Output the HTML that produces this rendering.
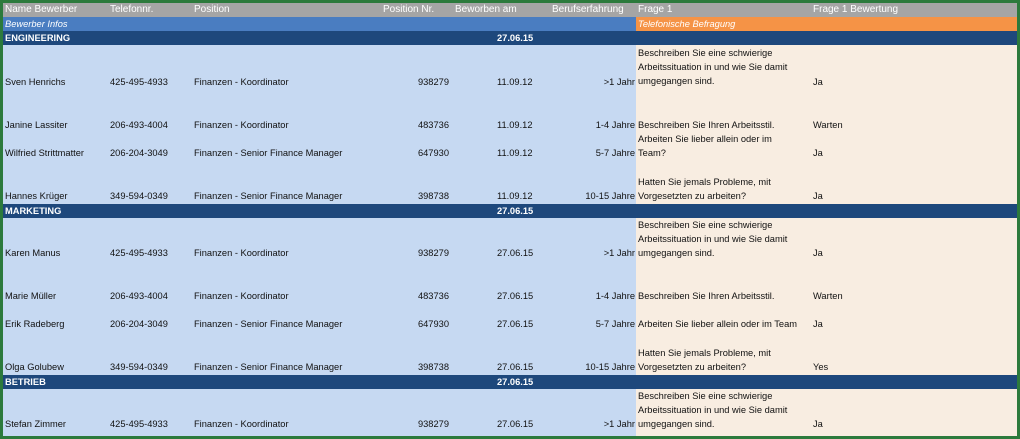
<!DOCTYPE html>
<html><head><meta charset="utf-8"><style>
*{margin:0;padding:0;box-sizing:border-box}
body{width:1020px;height:439px;background:#2c7a3c;position:relative;overflow:hidden;font-family:"Liberation Sans",Arial,sans-serif;font-size:9.3px;color:#111}
.b{position:absolute}
.t{position:absolute;line-height:14px;white-space:nowrap}
.r{text-align:right}
.h{color:#fff;font-size:10px}
.w{color:#fff;font-weight:bold}
</style></head><body>
<div class="b" style="left:3px;top:3px;width:1014px;height:14px;background:#a5a5a5"></div>
<div class="b" style="left:3px;top:17px;width:633px;height:14px;background:#4a7dc1"></div>
<div class="b" style="left:636px;top:17px;width:381px;height:14px;background:#f59346"></div>
<div class="b" style="left:3px;top:31px;width:633px;height:405px;background:#c6d9f2"></div>
<div class="b" style="left:636px;top:31px;width:381px;height:405px;background:#f8ede1"></div>
<div class="b" style="left:3px;top:31px;width:1014px;height:14px;background:#1e487c"></div>
<div class="b" style="left:3px;top:204px;width:1014px;height:14px;background:#1e487c"></div>
<div class="b" style="left:3px;top:375px;width:1014px;height:14px;background:#1e487c"></div>

<div class="t h" style="left:5px;top:3px">Name Bewerber</div>
<div class="t h" style="left:110px;top:3px">Telefonnr.</div>
<div class="t h" style="left:194px;top:3px">Position</div>
<div class="t h" style="left:383px;top:3px">Position Nr.</div>
<div class="t h" style="left:455px;top:3px">Beworben am</div>
<div class="t h" style="left:552px;top:3px">Berufserfahrung</div>
<div class="t h" style="left:638px;top:3px">Frage 1</div>
<div class="t h" style="left:813px;top:3px">Frage 1 Bewertung</div>
<div class="t" style="left:5px;top:17px;color:#fff;font-style:italic">Bewerber Infos</div>
<div class="t" style="left:638px;top:17px;color:#fff;font-style:italic">Telefonische Befragung</div>

<div class="t w" style="left:5px;top:31px">ENGINEERING</div><div class="t w" style="left:497px;top:31px">27.06.15</div>
<div class="t w" style="left:5px;top:204px">MARKETING</div><div class="t w" style="left:497px;top:204px">27.06.15</div>
<div class="t w" style="left:5px;top:375px">BETRIEB</div><div class="t w" style="left:497px;top:375px">27.06.15</div>

<!-- rows: top = line y -7 -->
<div class="t" style="left:5px;top:75px">Sven Henrichs</div><div class="t" style="left:110px;top:75px">425-495-4933</div><div class="t" style="left:194px;top:75px">Finanzen - Koordinator</div><div class="t r" style="left:380px;width:69px;top:75px">938279</div><div class="t" style="left:497px;top:75px">11.09.12</div><div class="t r" style="left:540px;width:95px;top:75px">&gt;1 Jahr</div>
<div class="t" style="left:638px;top:46px">Beschreiben Sie eine schwierige<br>Arbeitssituation in und wie Sie damit<br>umgegangen sind.</div><div class="t" style="left:813px;top:75px">Ja</div>

<div class="t" style="left:5px;top:118px">Janine Lassiter</div><div class="t" style="left:110px;top:118px">206-493-4004</div><div class="t" style="left:194px;top:118px">Finanzen - Koordinator</div><div class="t r" style="left:380px;width:69px;top:118px">483736</div><div class="t" style="left:497px;top:118px">11.09.12</div><div class="t r" style="left:540px;width:95px;top:118px">1-4 Jahre</div>
<div class="t" style="left:638px;top:118px">Beschreiben Sie Ihren Arbeitsstil.</div><div class="t" style="left:813px;top:118px">Warten</div>

<div class="t" style="left:5px;top:146px">Wilfried Strittmatter</div><div class="t" style="left:110px;top:146px">206-204-3049</div><div class="t" style="left:194px;top:146px">Finanzen - Senior Finance Manager</div><div class="t r" style="left:380px;width:69px;top:146px">647930</div><div class="t" style="left:497px;top:146px">11.09.12</div><div class="t r" style="left:540px;width:95px;top:146px">5-7 Jahre</div>
<div class="t" style="left:638px;top:132px">Arbeiten Sie lieber allein oder im<br>Team?</div><div class="t" style="left:813px;top:146px">Ja</div>

<div class="t" style="left:5px;top:189px">Hannes Krüger</div><div class="t" style="left:110px;top:189px">349-594-0349</div><div class="t" style="left:194px;top:189px">Finanzen - Senior Finance Manager</div><div class="t r" style="left:380px;width:69px;top:189px">398738</div><div class="t" style="left:497px;top:189px">11.09.12</div><div class="t r" style="left:540px;width:95px;top:189px">10-15 Jahre</div>
<div class="t" style="left:638px;top:175px">Hatten Sie jemals Probleme, mit<br>Vorgesetzten zu arbeiten?</div><div class="t" style="left:813px;top:189px">Ja</div>

<div class="t" style="left:5px;top:246px">Karen Manus</div><div class="t" style="left:110px;top:246px">425-495-4933</div><div class="t" style="left:194px;top:246px">Finanzen - Koordinator</div><div class="t r" style="left:380px;width:69px;top:246px">938279</div><div class="t" style="left:497px;top:246px">27.06.15</div><div class="t r" style="left:540px;width:95px;top:246px">&gt;1 Jahr</div>
<div class="t" style="left:638px;top:218px">Beschreiben Sie eine schwierige<br>Arbeitssituation in und wie Sie damit<br>umgegangen sind.</div><div class="t" style="left:813px;top:246px">Ja</div>

<div class="t" style="left:5px;top:289px">Marie Müller</div><div class="t" style="left:110px;top:289px">206-493-4004</div><div class="t" style="left:194px;top:289px">Finanzen - Koordinator</div><div class="t r" style="left:380px;width:69px;top:289px">483736</div><div class="t" style="left:497px;top:289px">27.06.15</div><div class="t r" style="left:540px;width:95px;top:289px">1-4 Jahre</div>
<div class="t" style="left:638px;top:289px">Beschreiben Sie Ihren Arbeitsstil.</div><div class="t" style="left:813px;top:289px">Warten</div>

<div class="t" style="left:5px;top:317px">Erik Radeberg</div><div class="t" style="left:110px;top:317px">206-204-3049</div><div class="t" style="left:194px;top:317px">Finanzen - Senior Finance Manager</div><div class="t r" style="left:380px;width:69px;top:317px">647930</div><div class="t" style="left:497px;top:317px">27.06.15</div><div class="t r" style="left:540px;width:95px;top:317px">5-7 Jahre</div>
<div class="t" style="left:638px;top:317px">Arbeiten Sie lieber allein oder im Team</div><div class="t" style="left:813px;top:317px">Ja</div>

<div class="t" style="left:5px;top:360px">Olga Golubew</div><div class="t" style="left:110px;top:360px">349-594-0349</div><div class="t" style="left:194px;top:360px">Finanzen - Senior Finance Manager</div><div class="t r" style="left:380px;width:69px;top:360px">398738</div><div class="t" style="left:497px;top:360px">27.06.15</div><div class="t r" style="left:540px;width:95px;top:360px">10-15 Jahre</div>
<div class="t" style="left:638px;top:346px">Hatten Sie jemals Probleme, mit<br>Vorgesetzten zu arbeiten?</div><div class="t" style="left:813px;top:360px">Yes</div>

<div class="t" style="left:5px;top:417px">Stefan Zimmer</div><div class="t" style="left:110px;top:417px">425-495-4933</div><div class="t" style="left:194px;top:417px">Finanzen - Koordinator</div><div class="t r" style="left:380px;width:69px;top:417px">938279</div><div class="t" style="left:497px;top:417px">27.06.15</div><div class="t r" style="left:540px;width:95px;top:417px">&gt;1 Jahr</div>
<div class="t" style="left:638px;top:389px">Beschreiben Sie eine schwierige<br>Arbeitssituation in und wie Sie damit<br>umgegangen sind.</div><div class="t" style="left:813px;top:417px">Ja</div>
</body></html>
